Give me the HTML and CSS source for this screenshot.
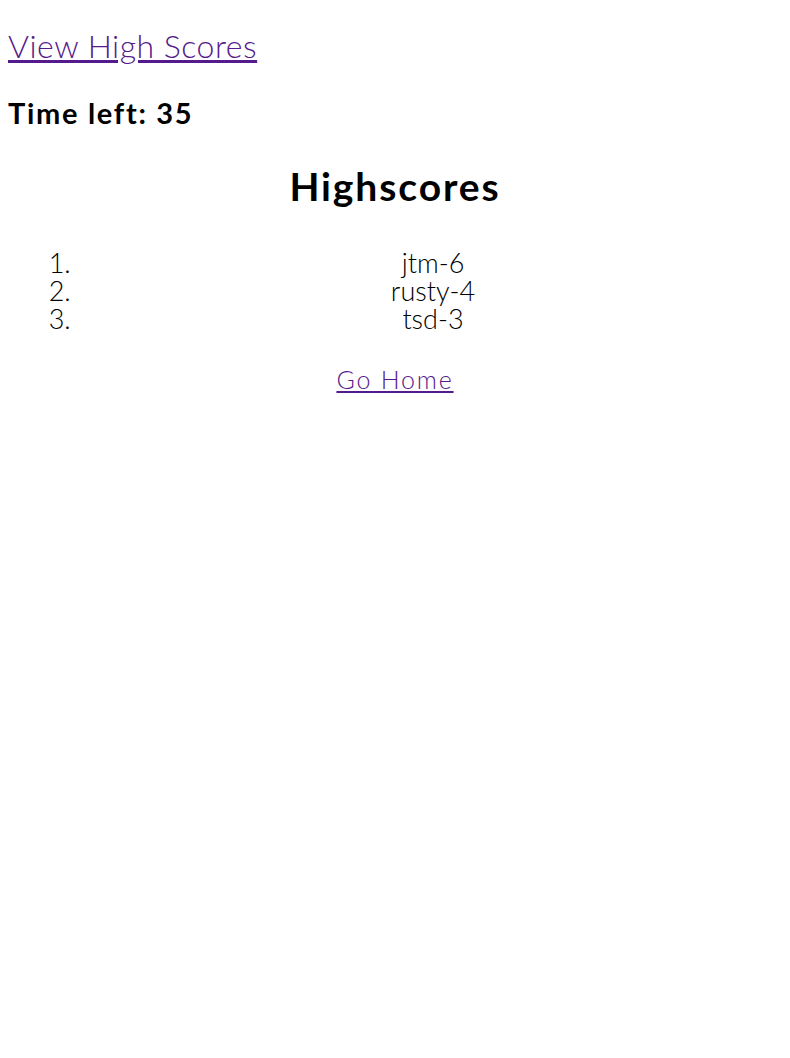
FILE: index.html
```html
<!DOCTYPE html>
<html>
<head>
<meta charset="utf-8">
<link rel="stylesheet" href="styles.css">
</head>
<body>
<header class="header">
  <a class="scores-link" href="#">View High Scores</a>
  <h2 class="timer">Time left: 35</h2>
</header>
<main class="board">
  <h1 class="title">Highscores</h1>
  <ol class="score-list">
    <li>jtm-6</li>
    <li>rusty-4</li>
    <li>tsd-3</li>
  </ol>
  <a class="home-link" href="#">Go Home</a>
</main>
</body>
</html>
```
FILE: styles.css
```css
body {
  margin: 8px;
  font-family: Lato, "Open Sans", sans-serif;
  color: #000;
  background: #fff;
}
a { color: #551a8b; }
.header {
  display: flex;
  flex-direction: column;
  align-items: flex-start;
}
.scores-link {
  font-size: 32px;
  font-weight: 300;
  letter-spacing: 0.5px;
  line-height: 40px;
  margin-top: 18px;
}
.timer {
  font-size: 29px;
  font-weight: 700;
  letter-spacing: 1.7px;
  line-height: 36px;
  margin: 29px 0 0;
}
.board {
  display: flex;
  flex-direction: column;
  align-items: center;
}
.title {
  font-size: 39px;
  font-weight: 700;
  letter-spacing: 1.9px;
  line-height: 48px;
  margin: 31px 0 0;
}
.score-list {
  align-self: stretch;
  margin: 39px 0 0;
  padding: 0 0 0 70px;
  font-size: 27px;
  font-weight: 300;
  line-height: 28px;
}
.score-list li {
  text-align: center;
  padding-left: 6px;
}
.home-link {
  font-size: 25px;
  font-weight: 300;
  letter-spacing: 1.8px;
  line-height: 30px;
  margin-top: 31px;
}
```
